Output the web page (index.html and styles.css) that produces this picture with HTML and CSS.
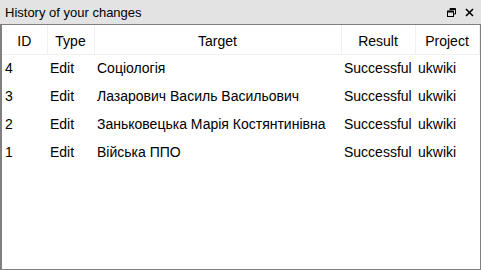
FILE: index.html
```html
<!DOCTYPE html>
<html lang="en">
<head>
    <meta charset="UTF-8">
    <title>History of your changes</title>
    <link rel="stylesheet" href="styles.css">
</head>
<body>
    <div class="dock">
        <div class="dock-title">
            <span class="dock-name">History of your changes</span>
            <span class="dock-btns">
                <svg class="btn-float" width="9" height="9" viewBox="0 0 9 9">
                    <path d="M3 0.5h5.5v5.5h-2 M3 0.5v2" fill="none" stroke="#000" stroke-width="1"/>
                    <rect x="0.5" y="3" width="6" height="5.5" fill="none" stroke="#000" stroke-width="1"/>
                    <rect x="0.5" y="3" width="6" height="1.5" fill="#000"/>
                    <rect x="3" y="0.5" width="5.5" height="1.5" fill="#000"/>
                </svg>
                <svg class="btn-close" width="9" height="9" viewBox="0 0 9 9">
                    <path d="M1 1L8 8M8 1L1 8" stroke="#000" stroke-width="1.6"/>
                </svg>
            </span>
        </div>
        <div class="dock-body">
            <table class="history">
                <thead>
                    <tr>
                        <th class="c-id">ID</th>
                        <th class="c-type">Type</th>
                        <th class="c-target">Target</th>
                        <th class="c-result">Result</th>
                        <th class="c-project">Project</th>
                    </tr>
                </thead>
                <tbody>
                    <tr><td>4</td><td>Edit</td><td>Соціологія</td><td>Successful</td><td>ukwiki</td></tr>
                    <tr><td>3</td><td>Edit</td><td>Лазарович Василь Васильович</td><td>Successful</td><td>ukwiki</td></tr>
                    <tr><td>2</td><td>Edit</td><td>Заньковецька Марія Костянтинівна</td><td>Successful</td><td>ukwiki</td></tr>
                    <tr><td>1</td><td>Edit</td><td>Війська ППО</td><td>Successful</td><td>ukwiki</td></tr>
                </tbody>
            </table>
        </div>
    </div>
</body>
</html>
```

FILE: styles.css
```css
* {
    margin: 0;
    padding: 0;
    box-sizing: border-box;
}
html, body {
    width: 481px;
    height: 270px;
    overflow: hidden;
}
body {
    font-family: "Liberation Sans", Arial, sans-serif;
    font-size: 14px;
    color: #000;
    background: #e3e3e3;
}
.dock {
    display: flex;
    flex-direction: column;
    height: 270px;
}
.dock-title {
    display: flex;
    align-items: center;
    justify-content: space-between;
    height: 24px;
    padding: 0 5px;
    background: #e3e3e3;
}
.dock-name {
    font-size: 13px;
}
.dock-btns {
    display: flex;
    align-items: center;
    gap: 9px;
    padding-right: 2px;
}
.dock-body {
    flex: 1;
    background: #fff;
    border: 1px solid #808080;
    border-left-width: 2px;
}
.history {
    border-collapse: collapse;
    table-layout: fixed;
    width: 477px;
}
.history th {
    height: 29px;
    padding-top: 3px;
    font-weight: normal;
    text-align: center;
    border-right: 1px solid #f0f0f0;
    border-bottom: 1px solid #f0f0f0;
}
.history td {
    height: 28px;
    padding-left: 3px;
    white-space: nowrap;
    overflow: hidden;
}
.c-id { width: 45px; }
.c-type { width: 47px; }
.c-target { width: 247px; }
.c-result { width: 74px; }
.c-project { width: 64px; }
```
